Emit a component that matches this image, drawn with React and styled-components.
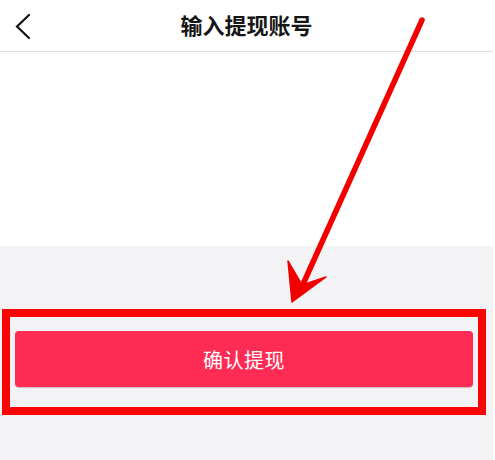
import React from 'react'
import styled, {createGlobalStyle} from 'styled-components'

const GlobalStyle = createGlobalStyle `
  html, body {
    margin: 0;
    padding: 0;
    background: #ffffff;
  }
  body {
    font-family: "Noto Sans CJK SC", "Noto Sans", sans-serif;
  }
  * {
    box-sizing: border-box;
  }
`

const Page = styled.div `
  position: relative;
  width: 493px;
  height: 460px;
  display: flex;
  flex-direction: column;
  overflow: hidden;
`

const Header = styled.header `
  height: 52px;
  flex: none;
  display: flex;
  align-items: center;
  justify-content: center;
  position: relative;
  border-bottom: 1px solid #dcdcdc;
`

const BackButton = styled.button `
  position: absolute;
  left: 8px;
  top: 8px;
  width: 26px;
  height: 34px;
  padding: 0;
  border: none;
  background: none;
  display: flex;
  align-items: center;
  justify-content: center;
`

const Title = styled.h1 `
  margin: 0 0 3px 0;
  font-size: 22px;
  font-weight: 700;
  color: #161616;
  letter-spacing: 0;
`

const Body = styled.div `
  height: 194px;
  flex: none;
  background: #ffffff;
`

const Footer = styled.section `
  flex: 1;
  background: #f3f3f5;
  padding-top: 63px;
  padding-left: 2px;
`

// annotation box drawn round the button
const HighlightFrame = styled.div `
  width: 484px;
  border: 8px solid #fb0404;
  padding: 14px 5px 20px 5px;
`

const ConfirmButton = styled.button `
  display: block;
  width: 100%;
  height: 56px;
  border: none;
  border-radius: 4px;
  background: #fe2c55;
  color: #ffffff;
  font-family: "Noto Sans CJK SC", "Noto Sans", sans-serif;
  font-size: 20px;
  font-weight: 400;
  letter-spacing: 0.5px;
  box-shadow: 0 1px 1px rgba(120, 0, 20, 0.25);
`

const ArrowLayer = styled.svg `
  position: absolute;
  left: 0;
  top: 0;
  pointer-events: none;
`

const BackIcon = () => (
    <svg width="20" height="30" viewBox="0 0 20 30">
        <polyline
            points="18,5 6,16.5 18,28"
            fill="none"
            stroke="#111"
            strokeWidth="2.2"
            strokeLinecap="round"
            strokeLinejoin="miter"/>
    </svg>
)

const Arrow = () => (
    <ArrowLayer width="493" height="460" viewBox="0 0 493 460">
        <line
            x1="422"
            y1="20"
            x2="304"
            y2="282"
            stroke="#f20000"
            strokeWidth="5.5"
            strokeLinecap="round"/>
        <path
            d="M288 261 L302 285 L326 277 L292 302 Z"
            fill="#f20000"
            stroke="#f20000"
            strokeWidth="1.5"
            strokeLinejoin="round"/>
    </ArrowLayer>
)

export default function App() {
    return (
        <Page>
            <GlobalStyle/>
            <Header>
                <BackButton aria-label="返回">
                    <BackIcon/>
                </BackButton>
                <Title>输入提现账号</Title>
            </Header>
            <Body/>
            <Footer>
                <HighlightFrame>
                    <ConfirmButton>确认提现</ConfirmButton>
                </HighlightFrame>
            </Footer>
            <Arrow/>
        </Page>
    )
}
